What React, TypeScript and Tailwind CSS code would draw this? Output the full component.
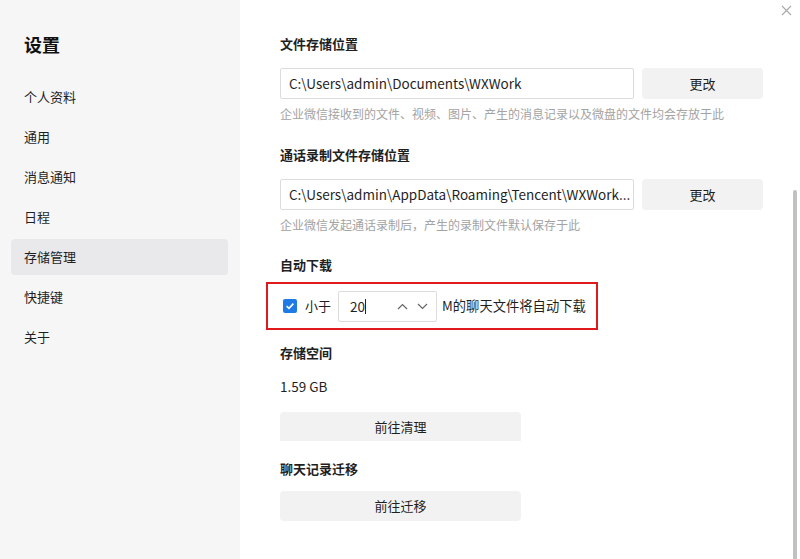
import React from "react";

const font = { fontFamily: '"Noto Sans CJK SC", "Microsoft YaHei", sans-serif' };

const menu = ["个人资料", "通用", "消息通知", "日程", "存储管理", "快捷键", "关于"];

export default function App() {
  return (
    <div className="relative flex w-[800px] h-[559px] overflow-hidden bg-white text-[#1f1f1f]" style={font}>
      <aside className="w-[240px] h-full bg-[#f6f6f6] flex flex-col">
        <div className="pt-[31px] pl-[24px] text-[18px] leading-[26px] font-bold text-[#111]">设置</div>
        <nav className="mt-[22px] flex flex-col gap-[4px] pl-[11px] pr-[12px]">
          {menu.map((m) => (
            <div
              key={m}
              className={
                "h-[36px] flex items-center pl-[13px] text-[13px] rounded-[4px] " +
                (m === "存储管理" ? "bg-[#e9e9eb]" : "")
              }
            >
              {m}
            </div>
          ))}
        </nav>
      </aside>

      <main className="flex-1 pl-[40px] flex flex-col">
        <div className="mt-[34px] text-[13px] leading-[20px] font-bold">文件存储位置</div>
        <div className="mt-[14px] flex gap-[8px]">
          <div className="w-[354px] h-[31px] border border-[#dcdcdc] rounded-[2px] flex items-center pl-[8px] text-[13.5px] truncate">
            C:\Users\admin\Documents\WXWork
          </div>
          <button className="w-[121px] h-[31px] bg-[#f2f2f2] rounded-[4px] text-[13px]">更改</button>
        </div>
        <div className="mt-[6px] text-[12px] leading-[18px] text-[#a3a3a3]">
          企业微信接收到的文件、视频、图片、产生的消息记录以及微盘的文件均会存放于此
        </div>

        <div className="mt-[22px] text-[13px] leading-[20px] font-bold">通话录制文件存储位置</div>
        <div className="mt-[14px] flex gap-[8px]">
          <div className="w-[354px] h-[31px] border border-[#dcdcdc] rounded-[2px] flex items-center pl-[8px] pr-[4px] text-[13.5px] whitespace-nowrap overflow-hidden">
            C:\Users\admin\AppData\Roaming\Tencent\WXWork...
          </div>
          <button className="w-[121px] h-[31px] bg-[#f2f2f2] rounded-[4px] text-[13px]">更改</button>
        </div>
        <div className="mt-[6px] text-[12px] leading-[18px] text-[#a3a3a3]">
          企业微信发起通话录制后，产生的录制文件默认保存于此
        </div>

        <div className="mt-[21px] text-[13px] leading-[20px] font-bold">自动下载</div>
        <div className="mt-[7px] -ml-[14px] w-[332px] h-[48px] border-2 border-[#e0191f] flex items-center pl-[15px] text-[13px]">
          <span className="w-[14px] h-[14px] bg-[#1e7be6] rounded-[2px] flex items-center justify-center">
            <svg width="10" height="10" viewBox="0 0 10 10" fill="none">
              <path d="M1.6 5.2 L4 7.4 L8.4 2.6" stroke="white" strokeWidth="1.6" />
            </svg>
          </span>
          <span className="ml-[8px]">小于</span>
          <div className="ml-[7px] w-[99px] h-[31px] border border-[#dcdcdc] rounded-[2px] flex items-center pl-[11px]">
            <span className="text-[13.5px]">20</span>
            <span className="w-px h-[15px] bg-[#222]" />
            <div className="ml-auto mr-[8px] flex items-center gap-[9px]">
              <svg width="11" height="7" viewBox="0 0 11 7" fill="none">
                <path d="M1 6 L5.5 1.5 L10 6" stroke="#666" strokeWidth="1.2" />
              </svg>
              <svg width="11" height="7" viewBox="0 0 11 7" fill="none">
                <path d="M1 1 L5.5 5.5 L10 1" stroke="#666" strokeWidth="1.2" />
              </svg>
            </div>
          </div>
          <span className="ml-[5px] text-[13.3px]">M的聊天文件将自动下载</span>
        </div>

        <div className="mt-[13px] text-[13px] leading-[20px] font-bold">存储空间</div>
        <div className="mt-[13px] text-[13.5px] leading-[20px]">1.59 GB</div>
        <button className="mt-[16px] w-[241px] h-[29px] bg-[#f2f2f2] rounded-t-[4px] text-[13px]">前往清理</button>

        <div className="mt-[18px] text-[13px] leading-[20px] font-bold">聊天记录迁移</div>
        <button className="mt-[12px] w-[241px] h-[30px] bg-[#f2f2f2] rounded-[4px] text-[13px]">前往迁移</button>
      </main>

      <svg className="absolute left-[781px] top-[5px]" width="11" height="11" viewBox="0 0 11 11" fill="none">
        <path d="M1 1 L10 10 M10 1 L1 10" stroke="#a8a8a8" strokeWidth="1.1" />
      </svg>
      <div className="absolute left-[793px] top-[190px] w-[4px] h-[372px] rounded-full bg-[#c1c1c1]" />
    </div>
  );
}
